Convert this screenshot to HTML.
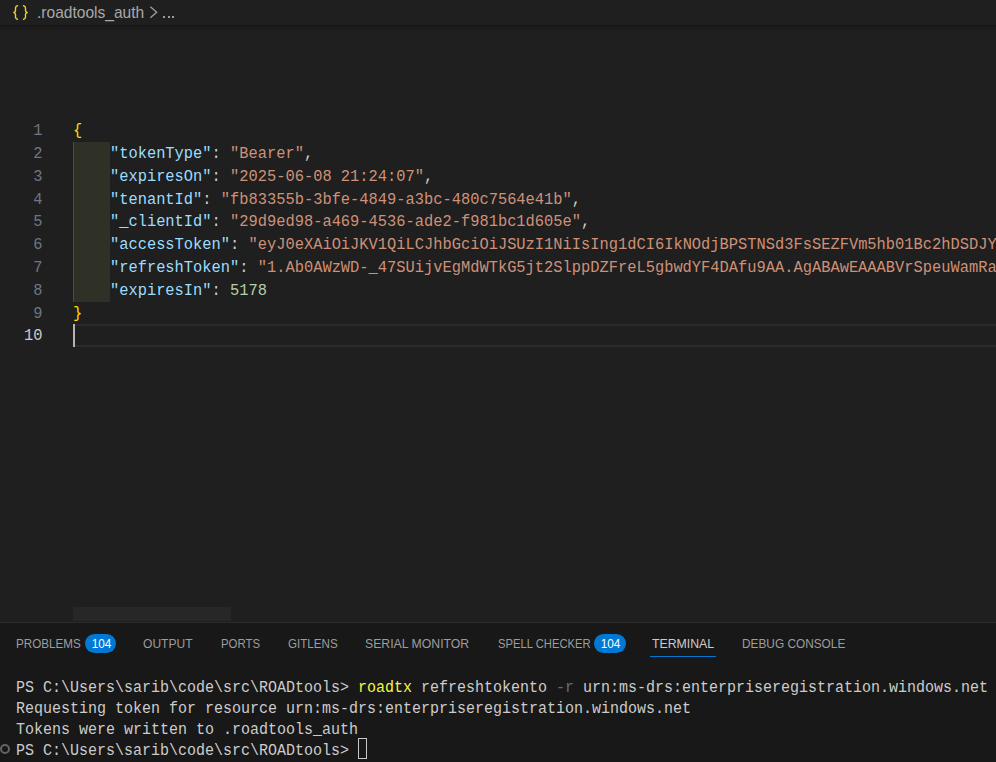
<!DOCTYPE html>
<html><head><meta charset="utf-8">
<style>
html,body{margin:0;padding:0;}
body{width:996px;height:762px;overflow:hidden;background:#1f1f1f;position:relative;font-family:"Liberation Sans",sans-serif;}
.abs{position:absolute;white-space:pre;}
/* breadcrumb */
#bc{left:0;top:0;width:996px;height:26px;background:#1f1f1f;}
#bcshadow{left:0;top:24.7px;width:996px;height:6px;background:linear-gradient(#161616,#1b1b1b 45%,#1f1f1f);}
#bcsvg{left:0;top:0;}
.dot{top:15.9px;width:2.1px;height:2.3px;background:#9c9c9c;}
#bctext{left:37.2px;top:0.8px;font-size:15.7px;line-height:24px;color:#a9a9a9;transform:scaleX(0.991);transform-origin:left center;}
/* editor */
.ln{left:0;width:42.5px;text-align:right;font-family:"Liberation Mono",monospace;font-size:16px;line-height:22.8px;height:22.8px;color:#6e7681;transform:translateY(1px) scaleX(0.962);transform-origin:right center;}
.ln.act{color:#cccccc;}
.cl{left:73px;font-family:"Liberation Mono",monospace;font-size:16px;line-height:22.8px;height:22.8px;color:#cccccc;transform:translateY(1px) scaleX(0.962);transform-origin:left center;}
.k{color:#9cdcfe}.s{color:#ce9178}.n{color:#b5cea8}.b{color:#ffd700}.p{color:#cccccc}
#indent{left:73px;top:142px;width:37px;height:160px;background:#2f3026;}
#guide{left:73px;top:142px;width:1px;height:160px;background:#4c4c3e;}
#curline{left:73px;top:324px;width:923px;height:19px;border-top:2px solid #2a2a2a;border-bottom:2px solid #2a2a2a;}
#cursor{left:73px;top:324px;width:2px;height:23px;background:#b4b4b2;}
#hscroll{left:73px;top:607px;width:158px;height:14px;background:#272727;}
/* panel */
#panel{left:0;top:622px;width:996px;height:140px;background:#181818;border-top:1px solid #2b2b2b;}
.tab{top:634.8px;font-size:13.5px;line-height:18px;color:#9d9d9d;transform-origin:left center;}
.tab.on{color:#cccccc;}
.badge{top:634px;height:19.1px;border-radius:9.6px;background:#0078d4;color:#fff;font-size:13.2px;line-height:19.1px;text-align:center;}
.badge span{display:inline-block;transform:scaleX(0.895);}
#tul{left:650px;top:655.6px;width:66px;height:1.4px;background:#0078d4;}
.tl{left:16px;font-family:"Liberation Mono",monospace;font-size:16px;line-height:21px;height:21px;color:#cccccc;transform:translateY(1.8px) scaleX(0.9374);transform-origin:left center;}
.y{color:#f5f543}.g{color:#6b6b6b}
#tcur{left:357.8px;top:738px;width:7.4px;height:19.2px;border:1px solid #c8c8c8;}
#circ{left:0.2px;top:744.4px;width:5.8px;height:5.8px;border:2.1px solid #636363;border-radius:50%;}
</style></head><body>
<div class="abs" id="bc"></div>
<div class="abs" id="bcshadow"></div>
<svg class="abs" id="bcsvg" width="200" height="26" viewBox="0 0 200 26" fill="none" stroke-linecap="round" stroke-linejoin="round">
<path d="M17.5 5.7 L16.3 6.3 Q15.5 6.8 15.5 7.9 L15.5 10.5 Q15.5 11.9 13.9 12.5 Q15.5 13.1 15.5 14.5 L15.5 17.1 Q15.5 18.2 16.3 18.7 L17.5 19.3" stroke="#ead51e" stroke-width="1.4"/>
<path d="M23.5 5.7 L24.7 6.3 Q25.5 6.8 25.5 7.9 L25.5 10.5 Q25.5 11.9 27.1 12.5 Q25.5 13.1 25.5 14.5 L25.5 17.1 Q25.5 18.2 24.7 18.7 L23.5 19.3" stroke="#ead51e" stroke-width="1.4"/>
<path d="M150.4 6.8 L156.7 12.3 L150.4 17.8" stroke="#a3a3a3" stroke-width="1.25" stroke-linecap="butt" stroke-linejoin="miter"/>
</svg>
<div class="abs" id="bctext">.roadtools_auth</div>
<div class="abs dot" style="left:163.1px"></div><div class="abs dot" style="left:167.8px"></div><div class="abs dot" style="left:172.3px"></div>

<div class="abs" id="indent"></div><div class="abs" id="guide"></div>
<div class="abs" id="curline"></div>
<div class="abs" id="cursor"></div>
<div class="abs" id="hscroll"></div>

<div class="abs ln" style="top:119px">1</div>
<div class="abs ln" style="top:142px">2</div>
<div class="abs ln" style="top:165px">3</div>
<div class="abs ln" style="top:188px">4</div>
<div class="abs ln" style="top:210px">5</div>
<div class="abs ln" style="top:233px">6</div>
<div class="abs ln" style="top:256px">7</div>
<div class="abs ln" style="top:279px">8</div>
<div class="abs ln" style="top:302px">9</div>
<div class="abs ln act" style="top:324px">10</div>

<div class="abs cl" style="top:119px"><span class="b">{</span></div>
<div class="abs cl" style="top:142px">    <span class="k">"tokenType"</span>: <span class="s">"Bearer"</span>,</div>
<div class="abs cl" style="top:165px">    <span class="k">"expiresOn"</span>: <span class="s">"2025-06-08 21:24:07"</span>,</div>
<div class="abs cl" style="top:188px">    <span class="k">"tenantId"</span>: <span class="s">"fb83355b-3bfe-4849-a3bc-480c7564e41b"</span>,</div>
<div class="abs cl" style="top:210px">    <span class="k">"_clientId"</span>: <span class="s">"29d9ed98-a469-4536-ade2-f981bc1d605e"</span>,</div>
<div class="abs cl" style="top:233px">    <span class="k">"accessToken"</span>: <span class="s">"eyJ0eXAiOiJKV1QiLCJhbGciOiJSUzI1NiIsIng1dCI6IkNOdjBPSTNSd3FsSEZFVm5hb01Bc2hDSDJYRSIsImtpZCI6</span></div>
<div class="abs cl" style="top:256px">    <span class="k">"refreshToken"</span>: <span class="s">"1.Ab0AWzWD-_47SUijvEgMdWTkG5jt2SlppDZFreL5gbwdYF4DAfu9AA.AgABAwEAAABVrSpeuWamRam2jAF1XRQE</span></div>
<div class="abs cl" style="top:279px">    <span class="k">"expiresIn"</span>: <span class="n">5178</span></div>
<div class="abs cl" style="top:302px"><span class="b">}</span></div>

<div class="abs" id="panel"></div>
<div class="abs tab" style="left:15.90px;transform:scaleX(0.8626)">PROBLEMS</div>
<div class="abs tab" style="left:142.75px;transform:scaleX(0.8936)">OUTPUT</div>
<div class="abs tab" style="left:220.96px;transform:scaleX(0.8444)">PORTS</div>
<div class="abs tab" style="left:287.75px;transform:scaleX(0.8596)">GITLENS</div>
<div class="abs tab" style="left:365.29px;transform:scaleX(0.9079)">SERIAL MONITOR</div>
<div class="abs tab" style="left:497.83px;transform:scaleX(0.8319)">SPELL CHECKER</div>
<div class="abs tab on" style="left:652.33px;transform:scaleX(0.9104)">TERMINAL</div>
<div class="abs tab" style="left:741.99px;transform:scaleX(0.8770)">DEBUG CONSOLE</div>
<div class="abs badge" style="left:85px;width:31px;text-indent:1.6px"><span>104</span></div>
<div class="abs badge" style="left:594px;width:32.1px;text-indent:0.6px"><span>104</span></div>
<div class="abs" id="tul"></div>

<div class="abs tl" style="top:675.5px">PS C:\Users\sarib\code\src\ROADtools&gt; <span class="y">roadtx</span> refreshtokento <span class="g">-r</span> urn:ms-drs:enterpriseregistration.windows.net</div>
<div class="abs tl" style="top:696.5px">Requesting token for resource urn:ms-drs:enterpriseregistration.windows.net</div>
<div class="abs tl" style="top:717.5px">Tokens were written to .roadtools_auth</div>
<div class="abs tl" style="top:738.5px">PS C:\Users\sarib\code\src\ROADtools&gt; </div>
<div class="abs" id="tcur"></div>
<div class="abs" id="circ"></div>
</body></html>
